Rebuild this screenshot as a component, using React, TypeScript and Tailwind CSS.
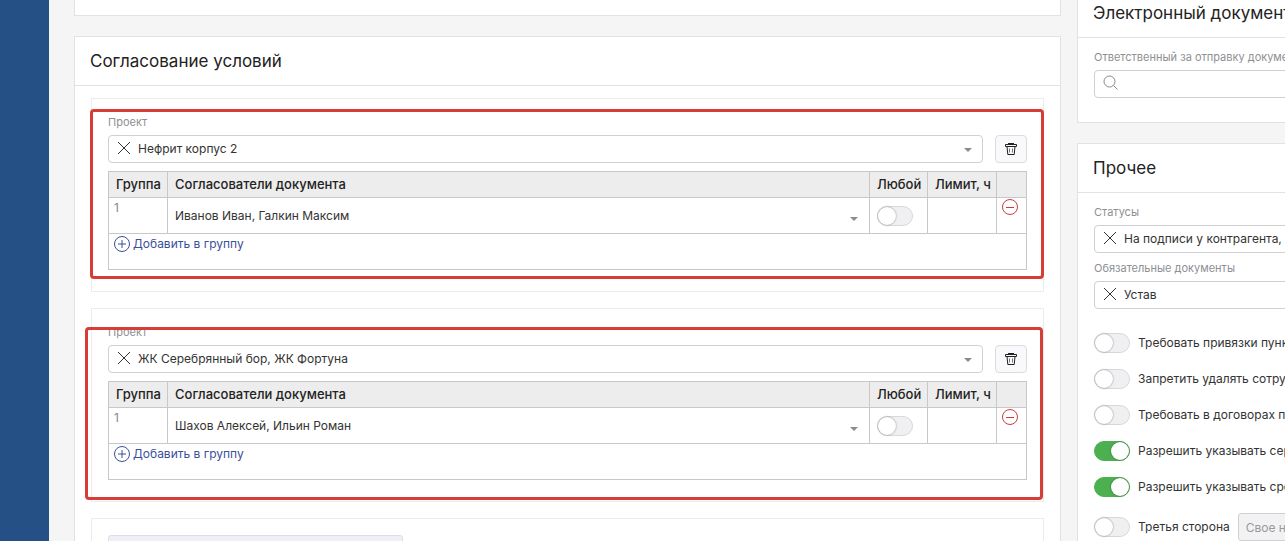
import React, { useState } from 'react';

interface Approval {
  project: string;
  approvers: string;
  frame: string;
}

const approvals: Approval[] = [
  {
    project: 'Нефрит корпус 2',
    approvers: 'Иванов Иван, Галкин Максим',
    frame: '-left-[2px] -right-[1px] top-[10px] bottom-[12px]',
  },
  {
    project: 'ЖК Серебрянный бор, ЖК Фортуна',
    approvers: 'Шахов Алексей, Ильин Роман',
    frame: '-left-[7px] right-0 top-[18px] bottom-[1px]',
  },
];

const options = [
  { label: 'Требовать привязки пункта', on: false },
  { label: 'Запретить удалять сотрудников', on: false },
  { label: 'Требовать в договорах пункт', on: false },
  { label: 'Разрешить указывать серию', on: true },
  { label: 'Разрешить указывать срок', on: true },
];

const Caret = ({ className }: { className: string }) => (
  <svg className={`pointer-events-none absolute ${className}`} width="8" height="4" viewBox="0 0 8 4" fill="#8c8c8c">
    <path d="M0 0h8L4 4z" />
  </svg>
);

const Toggle = ({ id, label, on = false }: { id: string; label?: string; on?: boolean }) => {
  const [checked, setChecked] = useState(on);
  return (
    <input
      id={id}
      type="checkbox"
      role="switch"
      aria-label={label}
      checked={checked}
      onChange={() => setChecked(!checked)}
      className="block h-5 w-9 shrink-0 cursor-pointer appearance-none rounded-full border border-[#d8d8da] bg-[#f0f0f2] before:block before:size-[18px] before:rounded-full before:bg-white before:shadow-[0_0_2px_rgba(0,0,0,0.45)] checked:border-[#4caf50] checked:bg-[#4caf50] checked:before:translate-x-4"
    />
  );
};

const FieldLabel = ({ htmlFor, children }: { htmlFor: string; children: React.ReactNode }) => (
  <label htmlFor={htmlFor} className="mb-0.5 block text-[11px] leading-[22px] text-[#8e9093]">
    {children}
  </label>
);

const SelectField = ({ id, value }: { id: string; value: string }) => (
  <div className="relative flex-1">
    <select id={id} className="block h-7 w-full appearance-none rounded-[4px] border border-[#d0d0d0] bg-white pl-[29px] pr-8 text-xs text-[#333]">
      <option>{value}</option>
    </select>
    <button type="button" aria-label="Очистить" className="absolute left-[9px] top-[6px]">
      <svg width="14" height="14" viewBox="0 0 14 14" fill="none" stroke="#333" strokeWidth="1">
        <path d="M1 1l12 12M13 1L1 13" />
      </svg>
    </button>
    <Caret className="right-[11px] top-[13px]" />
  </div>
);

const Card = ({ title, children }: { title: string; children: React.ReactNode }) => (
  <section className="mb-5 border border-[#e2e2e2] bg-white">
    <h2 className="flex h-[49px] items-center border-b border-[#e2e2e2] px-[15px] pt-0.5 text-[17px] text-[#222]">{title}</h2>
    {children}
  </section>
);

const ApprovalGroup = ({ item, index }: { item: Approval; index: number }) => (
  <div className="relative mb-4 border border-[#ececec] px-4 pb-[21px] pt-3">
    <FieldLabel htmlFor={`project-${index}`}>Проект</FieldLabel>
    <div className="mb-2 flex gap-3">
      <SelectField id={`project-${index}`} value={item.project} />
      <button type="button" aria-label="Удалить" className="flex h-7 w-8 items-center justify-center rounded-[4px] border border-[#dcdce0] bg-[#f9f9fb]">
        <svg width="14" height="14" viewBox="0 0 14 14" fill="none" stroke="#222" strokeWidth="1">
          <path d="M4 1.5h6M1.5 2.5h11v2h-11zM3 4.5l.8 8h6.4l.8-8" />
          <path d="M5.5 6.5v4M8.5 6.5v4" stroke="#777" />
        </svg>
      </button>
    </div>

    <table className="w-full table-fixed border-collapse text-xs text-[#333] [&_td]:border [&_td]:border-[#c8c8c8] [&_th]:border [&_th]:border-[#c8c8c8]">
      <colgroup>
        <col className="w-[59px]" />
        <col />
        <col className="w-[58px]" />
        <col className="w-[69px]" />
        <col className="w-[30px]" />
      </colgroup>
      <thead className="bg-[#ededed] text-left text-[13px] text-[#222]">
        <tr className="h-[26px] [&>th]:whitespace-nowrap [&>th]:p-0 [&>th]:pl-[7px] [&>th]:font-medium">
          <th>Группа</th>
          <th>Согласователи документа</th>
          <th>Любой</th>
          <th>Лимит, ч</th>
          <th />
        </tr>
      </thead>
      <tbody>
        <tr className="h-9">
          <td className="pl-[5px] align-top leading-5 text-[#888]">1</td>
          <td className="relative p-0">
            <select aria-label="Согласователи документа" className="block h-[34px] w-full appearance-none bg-transparent pl-[7px] pr-8">
              <option>{item.approvers}</option>
            </select>
            <Caret className="right-[11px] top-[19px]" />
          </td>
          <td className="pl-[7px]">
            <Toggle id={`any-${index}`} label="Любой" />
          </td>
          <td />
          <td className="pl-[5px] align-top">
            <button type="button" aria-label="Убрать" className="block">
              <svg width="16" height="18" viewBox="0 0 16 18" fill="none" stroke="#cf3a3a" strokeWidth="1">
                <circle cx="8" cy="9" r="7.5" />
                <path d="M4 9.5h8" />
              </svg>
            </button>
          </td>
        </tr>
        <tr className="h-9">
          <td colSpan={5} className="pl-[5px] align-top">
            <button type="button" className="flex items-center gap-[3px] leading-5 text-[#3b4f9a]">
              <svg width="16" height="16" viewBox="0 0 16 16" fill="none" stroke="#3b4f9a" strokeWidth="1">
                <circle cx="8" cy="8" r="7.5" />
                <path d="M4 8h8M8 4v8" />
              </svg>
              Добавить в группу
            </button>
          </td>
        </tr>
      </tbody>
    </table>

    {/* Highlight frame */}
    <div className={`pointer-events-none absolute rounded-[4px] border-3 border-[#d83c36] ${item.frame}`} />
  </div>
);

const App: React.FC = () => {
  return (
    <div className="flex h-screen overflow-hidden bg-[#f5f5f5] font-['Inter',sans-serif]">
      <nav className="w-[49px] shrink-0 bg-[#255085]" />

      <main className="-mt-3 ml-[25px] min-w-0 flex-1">
        <div className="mb-5 h-7 border border-[#e2e2e2] bg-white" />
        <Card title="Согласование условий">
          <div className="px-4 pt-3">
            {approvals.map((item, index) => (
              <ApprovalGroup key={item.project} item={item} index={index} />
            ))}
            <div className="border border-[#ececec] px-4 py-4">
              <button type="button" aria-label="Добавить проект" className="block h-7 w-[295px] rounded-[3px] border border-[#dcdde6] bg-[#eeeff7]" />
            </div>
          </div>
        </Card>
      </main>

      {/* Settings column runs past the right edge of the window */}
      <aside className="-mt-3 ml-4 w-[208px] shrink-0 overflow-hidden">
        <div className="w-[420px] whitespace-nowrap">
          <Card title="Электронный документооборот">
            <div className="px-4 pb-6 pt-2">
              <FieldLabel htmlFor="sender">Ответственный за отправку документов</FieldLabel>
              <div className="relative">
                <input id="sender" type="text" className="block h-7 w-full rounded-[4px] border border-[#d0d0d0] bg-white pl-[29px] text-xs" />
                <svg className="pointer-events-none absolute left-[9px] top-[5px]" width="16" height="16" viewBox="0 0 16 16" fill="none" stroke="#888" strokeWidth="1">
                  <circle cx="6.5" cy="6.5" r="5.5" />
                  <path d="M10.5 10.5l4 4" />
                </svg>
              </div>
            </div>
          </Card>

          <Card title="Прочее">
            <div className="px-4 pt-2">
              <FieldLabel htmlFor="statuses">Статусы</FieldLabel>
              <SelectField id="statuses" value="На подписи у контрагента, Подписан" />
              <div className="mt-1">
                <FieldLabel htmlFor="required-docs">Обязательные документы</FieldLabel>
                <SelectField id="required-docs" value="Устав" />
              </div>
              <div className="mt-4 text-xs text-[#333]">
                {options.map((option, index) => (
                  <div key={option.label} className="flex h-9 items-center gap-2">
                    <Toggle id={`option-${index}`} on={option.on} />
                    <label htmlFor={`option-${index}`}>{option.label}</label>
                  </div>
                ))}
                <div className="mt-2 flex h-7 items-center gap-2">
                  <Toggle id="third-party" />
                  <label htmlFor="third-party">Третья сторона</label>
                  <input
                    type="text"
                    aria-label="Третья сторона"
                    placeholder="Свое название"
                    disabled
                    className="h-7 w-40 rounded-[3px] border border-[#d0d0d0] bg-[#f2f2f4] px-[7px] placeholder:text-[#999]"
                  />
                </div>
              </div>
            </div>
          </Card>
        </div>
      </aside>
    </div>
  );
};

export default App;
